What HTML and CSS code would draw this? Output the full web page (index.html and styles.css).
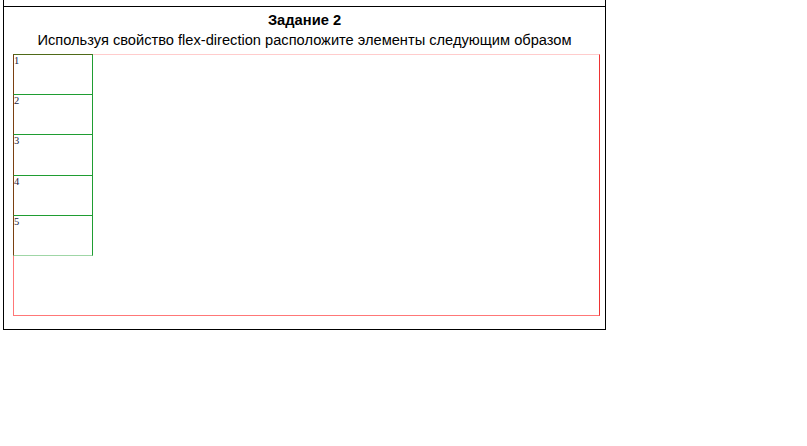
FILE: index.html
```html
<!DOCTYPE html>
<html lang="ru">
<head>
<meta charset="utf-8">
<link rel="stylesheet" href="styles.css">
</head>
<body>
<div class="prev-task"></div>
<section class="task">
  <div class="task-title">Задание 2</div>
  <div class="task-text">Используя свойство flex-direction расположите элементы следующим образом</div>
  <div class="flex-box">
    <div class="item item-first">1</div>
    <div class="item">2</div>
    <div class="item item-tall">3</div>
    <div class="item">4</div>
    <div class="item item-last">5</div>
  </div>
</section>
</body>
</html>
```
FILE: styles.css
```css
html, body {
  margin: 0;
  padding: 0;
  background: #fff;
}
body {
  padding-left: 3px;
  font-family: "Liberation Sans", Arial, sans-serif;
  color: #000;
}
.prev-task {
  width: 601px;
  height: 6px;
  border-left: 1px solid #000;
  border-right: 1px solid #000;
  border-bottom: 1px solid #000;
}
.task {
  width: 601px;
  border: 1px solid #000;
  border-top: none;
  padding: 3px 0 13px 0;
}
.task-title {
  text-align: center;
  font-weight: bold;
  font-size: 14.7px;
  line-height: 20px;
}
.task-text {
  text-align: center;
  font-size: 14.65px;
  line-height: 20px;
}
.flex-box {
  display: flex;
  flex-direction: column;
  margin: 4px 0 0 9px;
  width: 585px;
  height: 260px;
  border-style: solid;
  border-width: 1px;
  border-color: #fcc #e33 #f77 #f77;
}
.item {
  box-sizing: border-box;
  width: 80px;
  height: 40px;
  margin-left: -1px;
  border: 1px solid #1f9d32;
  border-top: none;
  border-left-color: #7a4012;
  font-family: "Liberation Serif", "Times New Roman", serif;
  font-size: 10.5px;
  line-height: 12px;
  color: #1a1a3a;
}
.item-first {
  margin-top: -1px;
  height: 41px;
  border-top: 1px solid #4f6a18;
}
.item-tall {
  height: 41px;
}
.item-last {
  border-bottom-color: #9fd6a6;
}
```
